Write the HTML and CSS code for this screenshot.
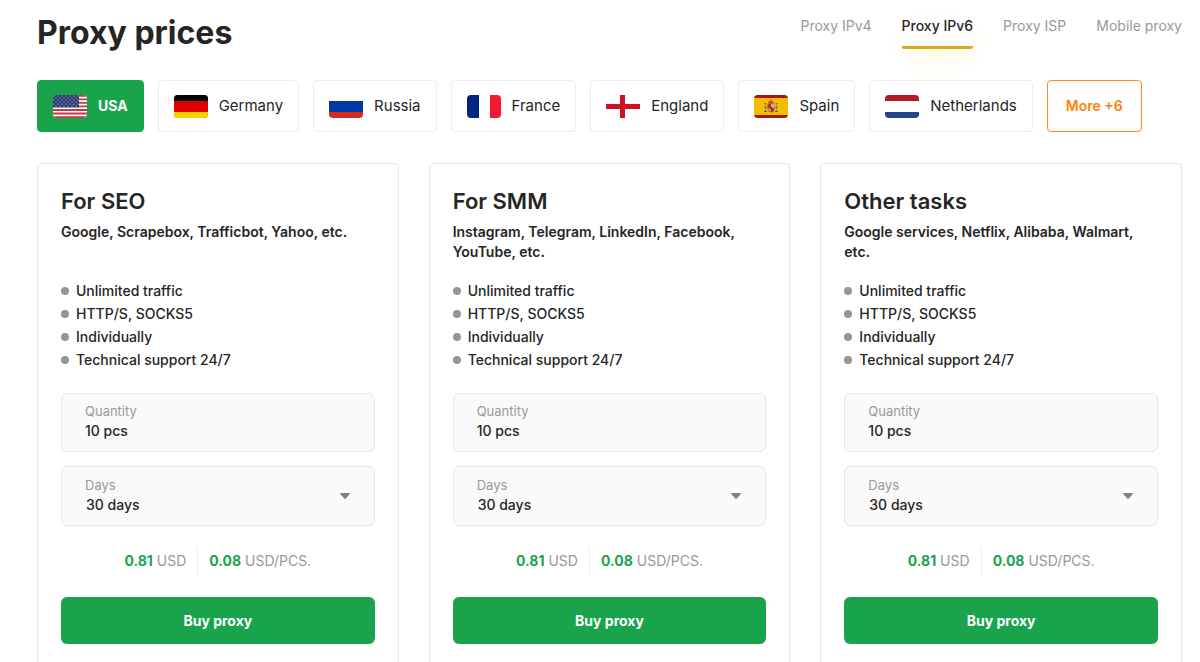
FILE: index.html
```html
<!DOCTYPE html>
<html lang="en">
<head>
    <meta charset="UTF-8">
    <meta name="viewport" content="width=device-width, initial-scale=1.0">
    <title>Proxy prices</title>
    <link rel="stylesheet" href="styles.css">
</head>
<body>
    <main class="prices">
        <header class="top">
            <h1>Proxy prices</h1>
            <nav class="types">
                <a href="#ipv4">Proxy IPv4</a>
                <a href="#ipv6" class="active">Proxy IPv6</a>
                <a href="#isp">Proxy ISP</a>
                <a href="#mobile">Mobile proxy</a>
            </nav>
        </header>

        <div class="countries">
            <button type="button" class="country active">
                <svg class="flag" viewBox="0 0 34 23" aria-hidden="true">
                    <defs>
                        <pattern id="stars" width="4" height="4" patternUnits="userSpaceOnUse">
                            <circle cx="1" cy="1" r="0.6" fill="#fff"/>
                            <circle cx="3" cy="3" r="0.6" fill="#fff"/>
                        </pattern>
                    </defs>
                    <rect width="34" height="23" fill="#fff"/>
                    <path d="M0 .9h34M0 4.4h34M0 7.9h34M0 11.4h34M0 15h34M0 18.5h34M0 22.1h34" stroke="#c63a45" stroke-width="1.8"/>
                    <rect width="26" height="12.4" fill="#25396f"/>
                    <rect width="26" height="12.4" fill="url(#stars)"/>
                </svg>
                USA
            </button>
            <button type="button" class="country">
                <svg class="flag" viewBox="0 0 34 23" aria-hidden="true">
                    <rect width="34" height="23" fill="#d00"/>
                    <rect width="34" height="6" fill="#000"/>
                    <rect y="17" width="34" height="6" fill="#ffce00"/>
                </svg>
                Germany
            </button>
            <button type="button" class="country">
                <svg class="flag" viewBox="0 0 34 23" aria-hidden="true">
                    <rect width="34" height="23" fill="#fff"/>
                    <rect y="6" width="34" height="11" fill="#0039a6"/>
                    <rect y="17" width="34" height="6" fill="#d52b1e"/>
                </svg>
                Russia
            </button>
            <button type="button" class="country">
                <svg class="flag" viewBox="0 0 34 23" aria-hidden="true">
                    <rect width="34" height="23" fill="#fff"/>
                    <rect width="12" height="23" fill="#00267f"/>
                    <rect x="23" width="11" height="23" fill="#f31830"/>
                </svg>
                France
            </button>
            <button type="button" class="country">
                <svg class="flag" viewBox="0 0 34 23" aria-hidden="true">
                    <rect width="34" height="23" fill="#fff"/>
                    <path d="M14 0h5v9h15v5H19v9h-5v-9H0V9h14z" fill="#ce1124"/>
                </svg>
                England
            </button>
            <button type="button" class="country">
                <svg class="flag" viewBox="0 0 34 23" aria-hidden="true">
                    <rect width="34" height="23" fill="#f1bf00"/>
                    <path d="M0 0h34v3H0zM0 20h34v3H0z" fill="#aa151b"/>
                    <path d="M14 8q0-2 3-2t3 2l-1 1h-4z" fill="#c8502a"/>
                    <path d="M16.500 4.500h1V6h-1z" fill="#8a6414"/>
                    <path d="M13.500 9h7v5q0 3-3.500 3.500-3.500-.5-3.500-3.500z" fill="#ad3a20"/>
                    <path d="M17 9h3.500v4H17z" fill="#c9a7a0"/>
                    <path d="M13.500 13H17v4q-3.500 0-3.500-3z" fill="#d98a20"/>
                    <circle cx="17" cy="13" r="1.200" fill="#3a4f9c"/>
                    <path d="M11 9h1v7h-1zM22 9h1v7h-1z" fill="#9a8a70"/>
                    <path d="M10 12.500h3M21 12.500h3" stroke="#c4552a"/>
                    <path d="M10 16.500h3M21 16.500h3" stroke="#4a5f8c"/>
                    <path d="M10.500 8.500h2M21.500 8.500h2" stroke="#c8502a"/>
                </svg>
                Spain
            </button>
            <button type="button" class="country">
                <svg class="flag" viewBox="0 0 34 23" aria-hidden="true">
                    <rect width="34" height="23" fill="#fff"/>
                    <rect width="34" height="6" fill="#ae1c28"/>
                    <rect y="17" width="34" height="6" fill="#21468b"/>
                </svg>
                Netherlands
            </button>
            <button type="button" class="country more">More +6</button>
        </div>

        <div class="cards">
            <form class="card">
                <h2>For SEO</h2>
                <p class="sites">Google, Scrapebox, Trafficbot, Yahoo, etc.</p>
                <ul class="features">
                    <li>Unlimited traffic</li>
                    <li>HTTP/S, SOCKS5</li>
                    <li>Individually</li>
                    <li>Technical support 24/7</li>
                </ul>
                <div class="field">
                    <label for="seo-quantity">Quantity</label>
                    <input type="text" id="seo-quantity" value="10 pcs">
                </div>
                <div class="field days">
                    <label for="seo-days">Days</label>
                    <select id="seo-days">
                        <option>30 days</option>
                    </select>
                    <svg class="caret" viewBox="0 0 10 6" aria-hidden="true"><path d="M1 0h8q1.500 0 .5 1.200L6 5.300q-1 1-2 0L.5 1.200Q-.5 0 1 0z"/></svg>
                </div>
                <div class="total">
                    <span><b>0.81</b> USD</span>
                    <span><b>0.08</b> USD/PCS.</span>
                </div>
                <button type="button" class="buy">Buy proxy</button>
            </form>

            <form class="card">
                <h2>For SMM</h2>
                <p class="sites">Instagram, Telegram, LinkedIn, Facebook, YouTube, etc.</p>
                <ul class="features">
                    <li>Unlimited traffic</li>
                    <li>HTTP/S, SOCKS5</li>
                    <li>Individually</li>
                    <li>Technical support 24/7</li>
                </ul>
                <div class="field">
                    <label for="smm-quantity">Quantity</label>
                    <input type="text" id="smm-quantity" value="10 pcs">
                </div>
                <div class="field days">
                    <label for="smm-days">Days</label>
                    <select id="smm-days">
                        <option>30 days</option>
                    </select>
                    <svg class="caret" viewBox="0 0 10 6" aria-hidden="true"><path d="M1 0h8q1.500 0 .5 1.200L6 5.300q-1 1-2 0L.5 1.200Q-.5 0 1 0z"/></svg>
                </div>
                <div class="total">
                    <span><b>0.81</b> USD</span>
                    <span><b>0.08</b> USD/PCS.</span>
                </div>
                <button type="button" class="buy">Buy proxy</button>
            </form>

            <form class="card">
                <h2>Other tasks</h2>
                <p class="sites">Google services, Netflix, Alibaba, Walmart, etc.</p>
                <ul class="features">
                    <li>Unlimited traffic</li>
                    <li>HTTP/S, SOCKS5</li>
                    <li>Individually</li>
                    <li>Technical support 24/7</li>
                </ul>
                <div class="field">
                    <label for="other-quantity">Quantity</label>
                    <input type="text" id="other-quantity" value="10 pcs">
                </div>
                <div class="field days">
                    <label for="other-days">Days</label>
                    <select id="other-days">
                        <option>30 days</option>
                    </select>
                    <svg class="caret" viewBox="0 0 10 6" aria-hidden="true"><path d="M1 0h8q1.500 0 .5 1.200L6 5.300q-1 1-2 0L.5 1.200Q-.5 0 1 0z"/></svg>
                </div>
                <div class="total">
                    <span><b>0.81</b> USD</span>
                    <span><b>0.08</b> USD/PCS.</span>
                </div>
                <button type="button" class="buy">Buy proxy</button>
            </form>
        </div>
    </main>
</body>
</html>
```
FILE: styles.css
```css
* {
    box-sizing: border-box;
}

body {
    margin: 0;
    background: #fff;
    color: #252525;
    font-family: Inter, "Open Sans", sans-serif;
    font-size: 14px;
    line-height: 20px;
}

button,
input,
select {
    font: inherit;
    color: inherit;
}

.prices {
    padding: 13px 18px 0 37px;
}

.top {
    display: flex;
    justify-content: space-between;
    align-items: flex-start;
    margin-bottom: 27px;
}

h1 {
    margin: 0;
    font-size: 32px;
    line-height: 40px;
    font-weight: 700;
}

.types {
    display: flex;
    gap: 30px;
    padding-top: 3px;
}

.types a {
    padding-bottom: 10px;
    border-bottom: 3px solid transparent;
    color: #999;
    text-decoration: none;
}

.types .active {
    border-bottom-color: #d9a91f;
    border-radius: 2px;
    color: #252525;
    font-weight: 500;
    box-shadow: 0 10px 24px -4px #fff3d3;
}

.countries {
    display: flex;
    flex-wrap: wrap;
    gap: 14px;
    margin-bottom: 31px;
}

.country {
    display: flex;
    align-items: center;
    gap: 11px;
    height: 52px;
    padding: 0 15px;
    background: #fff;
    border: 1px solid #ececec;
    border-radius: 4px;
    font-size: 15px;
    cursor: pointer;
}

.country.active {
    background: #19a44b;
    border-color: #19a44b;
    color: #fff;
    font-size: 14px;
    font-weight: 700;
}

.country.more {
    padding: 0 18px;
    border-color: #ff8a1c;
    color: #ff7f0a;
    font-size: 14px;
    font-weight: 600;
}

.flag {
    width: 34px;
    height: 23px;
    border-radius: 4px;
}

.cards {
    display: grid;
    grid-template-columns: repeat(3, 1fr);
    gap: 30px;
}

.card {
    display: flex;
    flex-direction: column;
    padding: 23px;
    border: 1px solid #e8e8e8;
    border-radius: 4px;
}

h2 {
    margin: 0 0 7px;
    font-size: 22px;
    line-height: 28px;
    font-weight: 600;
}

.sites {
    min-height: 40px;
    margin: 0 0 17px;
    font-weight: 600;
}

.features {
    margin: 0 0 22px;
    padding: 0;
    list-style: none;
    font-weight: 500;
    line-height: 23px;
}

.features li {
    display: flex;
    align-items: center;
    gap: 7px;
}

.features li::before {
    content: "";
    width: 8px;
    height: 8px;
    border-radius: 50%;
    background: #959595;
}

.field {
    position: relative;
    display: flex;
    flex-direction: column;
    height: 59px;
    margin-bottom: 14px;
    padding: 7px 23px;
    background: #fafafa;
    border: 1px solid #e8e8e8;
    border-radius: 6px;
}

.field.days {
    height: 60px;
    padding-top: 8px;
}

.field label {
    color: #999;
    font-size: 13px;
}

.field input,
.field select {
    width: 100%;
    height: 20px;
    padding: 0;
    border: none;
    outline: none;
    background: none;
    font-weight: 500;
    appearance: none;
}

.field select {
    padding-left: 1px;
}

.caret {
    position: absolute;
    top: 26px;
    right: 24px;
    width: 10px;
    height: 6px;
    fill: #808080;
    pointer-events: none;
}

.total {
    display: flex;
    justify-content: center;
    margin: 7px 0 22px;
    color: #999;
    line-height: 28px;
}

.total span + span {
    margin-left: 11px;
    padding-left: 11px;
    border-left: 1px solid #ececec;
}

.total b {
    color: #19a44b;
}

.buy {
    height: 47px;
    background: #19a44b;
    border: none;
    border-radius: 6px;
    color: #fff;
    font-weight: 700;
    cursor: pointer;
}
```
